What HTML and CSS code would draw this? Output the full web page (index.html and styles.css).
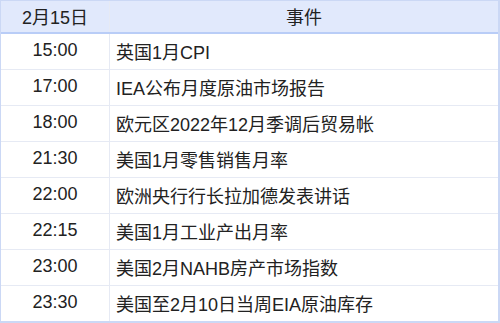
FILE: index.html
```html
<!DOCTYPE html>
<html lang="zh">
<head>
<meta charset="utf-8">
<link rel="stylesheet" href="styles.css">
</head>
<body>
<div class="sched">
  <div class="row head">
    <div class="time">2月15日</div>
    <div class="event center">事件</div>
  </div>
  <div class="row"><div class="time">15:00</div><div class="event">英国1月CPI</div></div>
  <div class="row"><div class="time">17:00</div><div class="event">IEA公布月度原油市场报告</div></div>
  <div class="row"><div class="time">18:00</div><div class="event">欧元区2022年12月季调后贸易帐</div></div>
  <div class="row"><div class="time">21:30</div><div class="event">美国1月零售销售月率</div></div>
  <div class="row"><div class="time">22:00</div><div class="event">欧洲央行行长拉加德发表讲话</div></div>
  <div class="row"><div class="time">22:15</div><div class="event">美国1月工业产出月率</div></div>
  <div class="row"><div class="time">23:00</div><div class="event">美国2月NAHB房产市场指数</div></div>
  <div class="row last"><div class="time">23:30</div><div class="event">美国至2月10日当周EIA原油库存</div></div>
</div>
</body>
</html>
```
FILE: styles.css
```css
html, body {
  margin: 0;
  padding: 0;
  background: #ffffff;
}
body {
  font-family: "Liberation Sans", "Noto Sans CJK SC", sans-serif;
  font-size: 18px;
  color: #222222;
}
.sched {
  width: 500px;
  height: 323px;
  box-sizing: border-box;
  border-top: 1px solid #cbd8f5;
  border-left: 1px solid #cbd8f5;
  border-right: 2px solid #cbd8f5;
  border-bottom: 2px solid #cbd8f5;
  display: flex;
  flex-direction: column;
}
.row {
  display: grid;
  grid-template-columns: 109px 1fr;
  height: 36px;
  box-sizing: border-box;
  border-bottom: 1px solid #e6eaf4;
}
.row.last {
  height: 35px;
  border-bottom: none;
}
.row.head {
  height: 33px;
  background: #e1e9fc;
  border-bottom: 2px solid #b9cdf7;
}
.time {
  display: flex;
  align-items: center;
  justify-content: center;
  padding-bottom: 2px;
  border-right: 1px solid #e6eaf4;
}
.event {
  display: flex;
  align-items: center;
  padding-left: 6px;
  padding-bottom: 2px;
}
.event.center {
  justify-content: center;
  padding-left: 0;
}
```
